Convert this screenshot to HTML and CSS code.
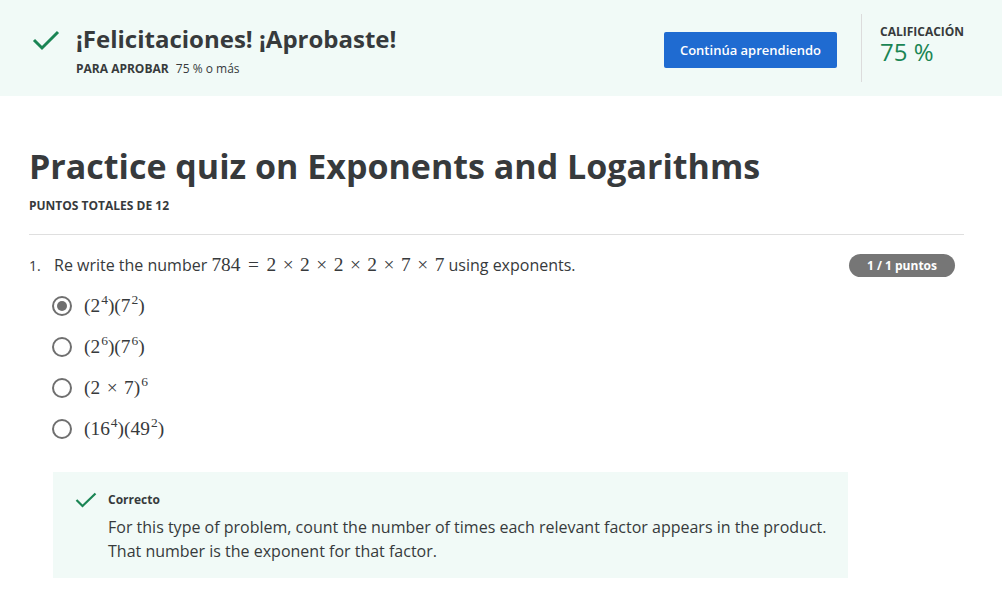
FILE: index.html
```html
<!DOCTYPE html>
<html lang="es">
<head>
<meta charset="utf-8">
<title>Practice quiz</title>
<link rel="stylesheet" href="styles.css">
</head>
<body>
<header class="banner">
  <div class="banner-main">
    <svg class="check-lg" viewBox="0 0 28 22" width="28" height="22"><path d="M2 11 L10 19 L26 3" fill="none" stroke="#1a8554" stroke-width="3"/></svg>
    <div class="banner-text">
      <h2 class="congrats">¡Felicitaciones! ¡Aprobaste!</h2>
      <div class="pass-line"><span class="pass-label">PARA APROBAR</span> <span class="pass-val">75 % o más</span></div>
    </div>
  </div>
  <button class="continue">Continúa aprendiendo</button>
  <div class="grade">
    <div class="grade-label">CALIFICACIÓN</div>
    <div class="grade-val">75 %</div>
  </div>
</header>

<main class="content">
  <h1 class="quiz-title">Practice quiz on Exponents and Logarithms</h1>
  <div class="total">PUNTOS TOTALES DE 12</div>
  <hr class="rule">

  <section class="question">
    <div class="q-head">
      <span class="q-num">1.</span>
      <p class="q-text">Re write the number <span class="m">784<span class="rel">=</span>2<span class="bin">×</span>2<span class="bin">×</span>2<span class="bin">×</span>2<span class="bin">×</span>7<span class="bin">×</span>7</span> using exponents.</p>
      <span class="badge">1 / 1 puntos</span>
    </div>
    <ul class="options">
      <li class="opt"><span class="radio checked"></span><span class="m">(2<sup>4</sup>)(7<sup>2</sup>)</span></li>
      <li class="opt"><span class="radio"></span><span class="m">(2<sup>6</sup>)(7<sup>6</sup>)</span></li>
      <li class="opt"><span class="radio"></span><span class="m">(2<span class="bin">×</span>7)<sup>6</sup></span></li>
      <li class="opt"><span class="radio"></span><span class="m">(16<sup>4</sup>)(49<sup>2</sup>)</span></li>
    </ul>
    <div class="feedback">
      <svg class="check-sm" viewBox="0 0 22 16" width="22" height="16"><path d="M1.5 8 L7.5 14 L20.5 1.5" fill="none" stroke="#1a8554" stroke-width="2.2"/></svg>
      <div class="fb-text">
        <div class="fb-title">Correcto</div>
        <p class="fb-body">For this type of problem, count the number of times each relevant factor appears in the product. That number is the exponent for that factor.</p>
      </div>
    </div>
  </section>
</main>
</body>
</html>
```

FILE: styles.css
```css
* { box-sizing: border-box; }
body {
  margin: 0;
  font-family: "Open Sans", "Liberation Sans", sans-serif;
  color: #373a3c;
  background: #fff;
}
.banner {
  height: 96px;
  background: #f1faf7;
  display: flex;
  align-items: flex-start;
}
.banner-main {
  display: flex;
  align-items: flex-start;
  padding: 28px 0 0 32px;
  width: 664px;
}
.check-lg { margin-top: 1px; flex: none; }
.banner-text { margin-left: 16px; }
.congrats {
  margin: 0;
  font-size: 24px;
  font-weight: 700;
  line-height: 22px;
  color: #373a3c;
}
.pass-line {
  margin-top: 11px;
  font-size: 12px;
  line-height: 16px;
}
.pass-label { font-weight: 700; margin-right: 4px; }
.continue {
  margin-top: 32px;
  width: 173px;
  height: 36px;
  border: none;
  border-radius: 2px;
  background: #1f6bd1;
  color: #fff;
  font-family: "Open Sans", sans-serif;
  font-size: 13px;
  font-weight: 600;
  padding: 0;
}
.grade {
  margin: 14px 0 0 24px;
  height: 68px;
  border-left: 1px solid #dcdcdc;
  padding: 10px 0 0 18px;
}
.grade-label {
  font-size: 12px;
  font-weight: 700;
  line-height: 16px;
}
.grade-val {
  margin-top: 0;
  font-size: 24px;
  line-height: 24px;
  color: #1a8554;
}
.content {
  padding: 0 38px 0 29px;
}
.quiz-title {
  margin: 46px 0 0;
  font-size: 34px;
  line-height: 48px;
  font-weight: 700;
}
.total {
  margin-top: 8px;
  font-size: 12px;
  font-weight: 700;
  line-height: 16px;
}
.rule {
  margin: 20px 0 0;
  border: none;
  border-top: 1px solid #dfdfdf;
}
.question { padding-top: 18px; }
.q-head {
  display: flex;
  align-items: center;
  height: 24px;
}
.q-num { width: 25px; font-size: 14px; }
.q-text {
  margin: 0;
  flex: 1;
  font-size: 16px;
  line-height: 24px;
}
.m {
  font-family: "Liberation Serif", "DejaVu Serif", serif;
  font-size: 19.4px;
}
.rel { margin: 0 7.5px; }
.bin { margin: 0 6.5px; }
.m sup { font-size: 13.5px; vertical-align: 8px; line-height: 0; margin-left: 1px; }
.badge {
  margin-right: 9px;
  height: 23px;
  width: 106px;
  border-radius: 12px;
  background: #767676;
  color: #fff;
  font-size: 12px;
  font-weight: 700;
  display: flex;
  align-items: center;
  justify-content: center;
}
.options {
  list-style: none;
  margin: 8px 0 0;
  padding: 0 0 0 23px;
}
.opt {
  display: flex;
  align-items: center;
  height: 41px;
}
.radio {
  width: 20px;
  height: 20px;
  border: 2px solid #6f6f6f;
  border-radius: 50%;
  margin-right: 12px;
  flex: none;
  display: flex;
  align-items: center;
  justify-content: center;
}
.radio.checked::after {
  content: "";
  width: 10px;
  height: 10px;
  border-radius: 50%;
  background: #6f6f6f;
}
.feedback {
  margin: 23px 116px 0 24px;
  background: #f1faf7;
  display: flex;
  padding: 20px 20px 15px 22px;
}
.check-sm { flex: none; margin-top: 0; }
.fb-text { margin-left: 11px; }
.fb-title {
  font-size: 12px;
  font-weight: 700;
  line-height: 16px;
}
.fb-body {
  margin: 7px 0 0;
  font-size: 16px;
  line-height: 24px;
}
```
